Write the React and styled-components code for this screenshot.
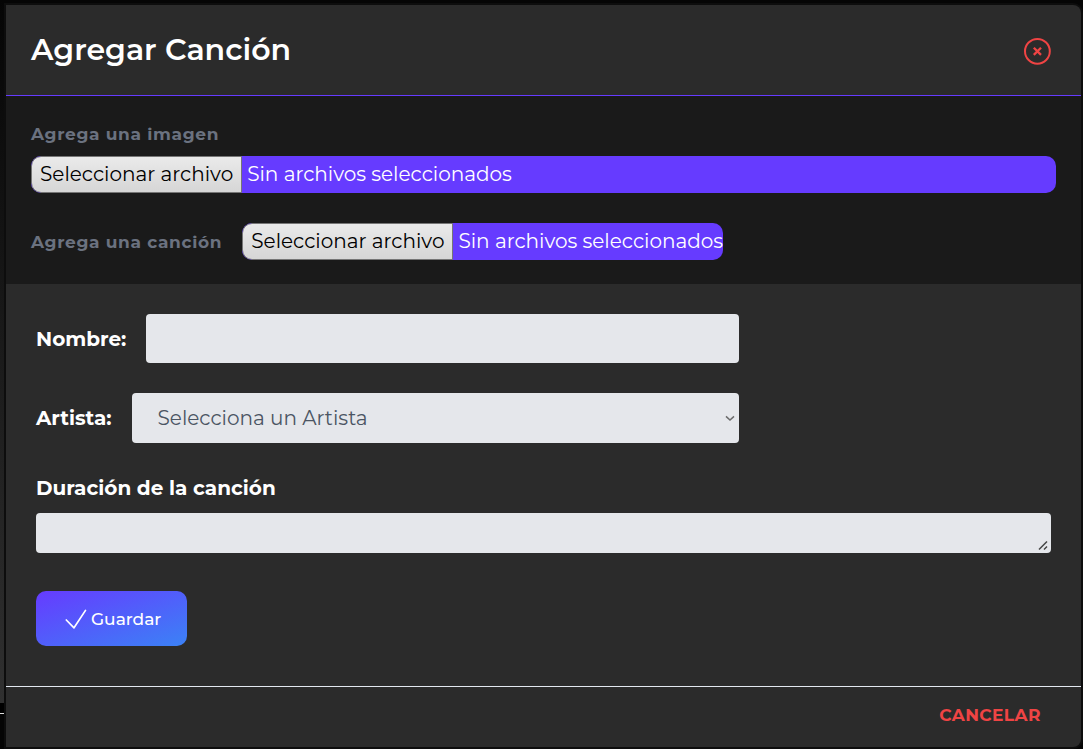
import React from "react";
import styled, { createGlobalStyle, css } from "styled-components";

const GlobalStyle = createGlobalStyle`
  * { box-sizing: border-box; }
  body {
    margin: 0;
    background: #050505;
    font-family: Montserrat, Inter, "Liberation Sans", sans-serif;
    color: #fff;
  }
  button, input, select, textarea { font-family: inherit; }
`;

const Backdrop = styled.div`
  position: absolute;
  top: 0;
  left: 0;
  width: 4px;
  height: 714px;
  background: linear-gradient(#050505, #303030 703px, #000 703px);
  border-bottom: 1px solid #ddd;
`;

const Page = styled.div`
  min-height: 100vh;
  display: flex;
  padding: 5px 2px 2px 6px;
`;

const Modal = styled.section`
  flex: 1;
  min-width: 0;
  display: flex;
  flex-direction: column;
  background: #2b2b2b;
  border-radius: 0 8px 8px 0;
  box-shadow: 0 0 0 2px #0d0d0d;
`;

const Header = styled.header`
  display: flex;
  align-items: center;
  justify-content: space-between;
  height: 91px;
  padding: 2px 30px 0 25px;
  border-bottom: 1px solid #663bff;
`;

const Title = styled.h1`
  margin: 0;
  padding-bottom: 2px;
  font-size: 30px;
  line-height: 40px;
  font-weight: 600;
`;

const IconButton = styled.button`
  display: flex;
  padding: 0;
  border: 0;
  background: none;
  color: #ef4444;
  cursor: pointer;
`;

const Uploads = styled.div`
  display: flex;
  flex-direction: column;
  gap: 30px;
  padding: 28px 25px 24px;
  background: #1a1a1a;
`;

const UploadGroup = styled.div`
  display: flex;
  flex-direction: ${(p) => (p.$inline ? "row" : "column")};
  align-items: ${(p) => (p.$inline ? "center" : "stretch")};
  gap: ${(p) => (p.$inline ? "20px" : "12px")};
`;

const UploadLabel = styled.label`
  font-size: 17px;
  line-height: 20px;
  font-weight: 700;
  letter-spacing: 0.04em;
  color: #6b7280;
`;

const FileBox = styled.div`
  position: relative;
  display: flex;
  height: 37px;
  overflow: hidden;
  border-radius: 10px;
  background: #663bff;
  font-size: 20px;
  line-height: 34px;
  white-space: nowrap;
`;

const FileButton = styled.span`
  padding: 0 8px;
  border: 1px solid #767676;
  border-radius: 10px 0 0 10px;
  background: linear-gradient(#eaeaea, #d6d6d6);
  color: #000;
`;

const FileName = styled.span`
  padding: 1px 0 0 5px;
`;

const FileInput = styled.input`
  position: absolute;
  inset: 0;
  width: 100%;
  opacity: 0;
  cursor: pointer;
`;

const Form = styled.form`
  flex: 1;
  display: flex;
  flex-direction: column;
  align-items: flex-start;
  gap: 30px;
  padding: 30px 30px 40px;
`;

const Field = styled.div`
  display: flex;
  align-items: center;
  gap: 20px;
  width: 70%;
  max-width: 703px;
`;

const StackedField = styled.div`
  display: flex;
  flex-direction: column;
  gap: 10px;
  width: 100%;
`;

const FieldLabel = styled.label`
  font-size: 20px;
  line-height: 30px;
  font-weight: 700;
`;

const control = css`
  border: 0;
  border-radius: 4px;
  background: #e5e7eb;
  color: #4b5563;
  font-size: 20px;
`;

const TextInput = styled.input`
  ${control}
  flex: 1;
  min-width: 0;
  height: 49px;
  padding: 0 20px;
`;

const ControlBox = styled.div`
  position: relative;
  flex: 1;
  min-width: 0;
`;

const Select = styled.select`
  ${control}
  appearance: none;
  display: block;
  width: 100%;
  height: 50px;
  padding: 0 26px;
`;

const Chevron = styled.svg`
  position: absolute;
  top: 20px;
  right: 4px;
  pointer-events: none;
`;

const TextArea = styled.textarea`
  ${control}
  display: block;
  width: 100%;
  height: 40px;
  padding: 4px 20px;
  &::-webkit-resizer { background: transparent; }
`;

const Grip = styled.svg`
  position: absolute;
  right: 2px;
  bottom: 2px;
  pointer-events: none;
`;

const SaveButton = styled.button`
  display: flex;
  align-items: center;
  gap: 3px;
  height: 55px;
  margin-top: 8px;
  padding: 0 26px 0 28px;
  border: 0;
  border-radius: 10px;
  background: linear-gradient(to bottom right, #663bff, #3b82f6);
  color: #fff;
  font-size: 17px;
  font-weight: 500;
  cursor: pointer;
`;

const Footer = styled.footer`
  display: flex;
  align-items: center;
  justify-content: flex-end;
  height: 61px;
  padding: 0 40px 4px;
  border-top: 1px solid #e2e8f0;
`;

const CancelButton = styled.button`
  padding: 0;
  border: 0;
  background: none;
  color: #ef4444;
  font-size: 17px;
  line-height: 24px;
  font-weight: 700;
  letter-spacing: 0.025em;
  text-transform: uppercase;
  cursor: pointer;
`;

function FilePicker({ id }) {
  return (
    <FileBox>
      <FileButton aria-hidden="true">Seleccionar archivo</FileButton>
      <FileName aria-hidden="true">Sin archivos seleccionados</FileName>
      <FileInput id={id} type="file" />
    </FileBox>
  );
}

export default function App() {
  return (
    <>
      <GlobalStyle />
      <Backdrop />
      <Page>
        <Modal>
          <Header>
            <Title>Agregar Canción</Title>
            <IconButton type="button" aria-label="Cerrar">
              <svg width="28" height="28" viewBox="0 0 28 28" fill="none" stroke="currentColor" strokeWidth="2">
                <circle cx="14.4" cy="14.3" r="12.4" />
                <path strokeWidth="2.3" d="M10.8 10.7l7.2 7.2M18 10.7l-7.2 7.2" />
              </svg>
            </IconButton>
          </Header>
          <Uploads>
            <UploadGroup>
              <UploadLabel htmlFor="imagen">Agrega una imagen</UploadLabel>
              <FilePicker id="imagen" />
            </UploadGroup>
            <UploadGroup $inline>
              <UploadLabel htmlFor="cancion">Agrega una canción</UploadLabel>
              <FilePicker id="cancion" />
            </UploadGroup>
          </Uploads>
          <Form>
            <Field>
              <FieldLabel htmlFor="nombre">Nombre:</FieldLabel>
              <TextInput id="nombre" type="text" />
            </Field>
            <Field>
              <FieldLabel htmlFor="artista">Artista:</FieldLabel>
              <ControlBox>
                <Select id="artista" defaultValue="">
                  <option value="">Selecciona un Artista</option>
                </Select>
                <Chevron width="10" height="10" viewBox="0 0 10 10" fill="none" stroke="#6b6b6b" strokeWidth="1.5">
                  <path d="M1 3.4L5 7l4-3.6" />
                </Chevron>
              </ControlBox>
            </Field>
            <StackedField>
              <FieldLabel htmlFor="duracion">Duración de la canción</FieldLabel>
              <ControlBox>
                <TextArea id="duracion" />
                <Grip width="11" height="11" viewBox="0 0 11 11" fill="none" stroke="#444" strokeWidth="1.5">
                  <path d="M1 9.5L9 1.5M6 9.5l3-3" />
                </Grip>
              </ControlBox>
            </StackedField>
            <SaveButton type="button">
              <svg width="24" height="24" viewBox="0 0 24 24" fill="none" stroke="currentColor" strokeWidth="1.7" strokeLinecap="round" strokeLinejoin="round">
                <path d="M2.3 13l7.7 7.8L21.5 3.4" />
              </svg>
              Guardar
            </SaveButton>
          </Form>
          <Footer>
            <CancelButton type="button">Cancelar</CancelButton>
          </Footer>
        </Modal>
      </Page>
    </>
  );
}
